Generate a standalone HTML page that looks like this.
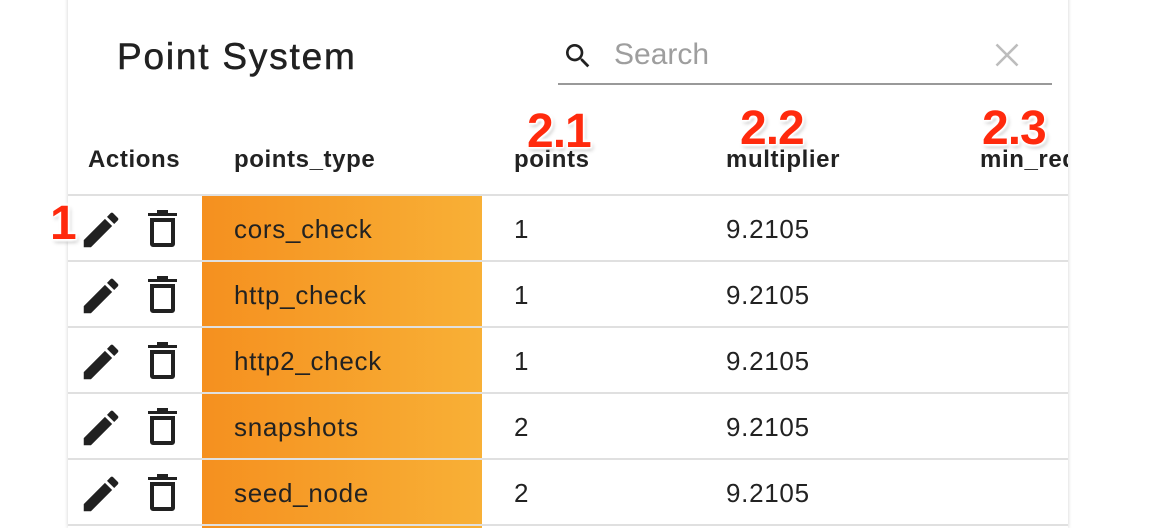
<!DOCTYPE html>
<html><head><meta charset="utf-8"><style>
*{margin:0;padding:0;box-sizing:border-box}
html,body{width:1160px;height:528px;overflow:hidden}
body{background:#fff;position:relative;font-family:"Liberation Sans",Arial,sans-serif;color:#212121}
.card{position:absolute;left:68px;top:-10px;width:1000px;height:538px;background:#fff;box-shadow:0 0 4px rgba(0,0,0,.18);overflow:hidden}
.abs{position:absolute}
.title{left:49px;top:46px;font-size:37px;letter-spacing:1.8px;color:#212121;-webkit-text-stroke:0.5px #212121}
.hd{font-size:24px;font-weight:bold;top:156px;color:#222;letter-spacing:0.6px}
.line{left:0;width:1000px;height:2px;background:#e0e0e0}
.cell{font-size:26px;color:#222;letter-spacing:0.7px}
.orange{left:134px;width:280px;background:linear-gradient(90deg,#f5901f,#f8b036)}
.lab{position:absolute;color:#ff2a0d;font-weight:bold;font-family:"Liberation Sans",Arial,sans-serif;font-size:48px;letter-spacing:-1px;text-shadow:0 0 2px #fff,1px 1px 0 #fff,-1px -1px 0 #fff,2px 2px 2px #fff,-2px 2px 2px #fff,2px -2px 2px #fff,-2px -2px 2px #fff,2px 3px 4px rgba(0,0,0,.3)}
</style></head><body>
<div class="card">
 <div class="abs title">Point System</div>
 <svg class="abs" style="left:494px;top:50px" width="32" height="32" viewBox="0 0 24 24"><path fill="#212121" d="M15.5 14h-.79l-.28-.27A6.47 6.47 0 0016 9.5 6.5 6.5 0 109.5 16c1.61 0 3.09-.59 4.23-1.57l.27.28v.79l5 4.99L20.49 19l-4.99-5zm-6 0C7.01 14 5 11.99 5 9.5S7.01 5 9.5 5 14 7.01 14 9.5 11.99 14 9.5 14z"/></svg>
 <div class="abs" style="left:546px;top:48px;font-size:30px;color:#9e9e9e">Search</div>
 <svg class="abs" style="left:925px;top:51px" width="28" height="28" viewBox="0 0 24 24"><path stroke="#bdbdbd" stroke-width="2.2" d="M3 3L21 21M21 3L3 21"/></svg>
 <div class="abs" style="left:490px;top:93px;width:494px;height:2px;background:#999"></div>
 <div class="abs hd" style="left:20px">Actions</div>
 <div class="abs hd" style="left:166px">points_type</div>
 <div class="abs hd" style="left:446px">points</div>
 <div class="abs hd" style="left:658px">multiplier</div>
 <div class="abs hd" style="left:912px">min_req</div>
 <div id="rows"></div>
</div>
<div class="lab" style="left:50px;top:196px">1</div>
<div class="lab" style="left:527px;top:104px">2.1</div>
<div class="lab" style="left:740px;top:101px">2.2</div>
<div class="lab" style="left:982px;top:101px">2.3</div>
<script>
var d=[["cors_check",1],["http_check",1],["http2_check",1],["snapshots",2],["seed_node",2],["",""]];
var h="";
for(var i=0;i<d.length;i++){var t=204+i*66;
h+='<div class="abs line" style="top:'+t+'px"></div>';
h+='<div class="abs orange" style="top:'+(t+2)+'px;height:64px"></div>';
if(d[i][0]){
h+='<div class="abs cell" style="left:166px;top:'+(t+20)+'px">'+d[i][0]+'</div>';
h+='<div class="abs cell" style="left:446px;top:'+(t+20)+'px">'+d[i][1]+'</div>';
h+='<div class="abs cell" style="left:658px;top:'+(t+20)+'px">9.2105</div>';
h+='<svg class="abs" style="left:10px;top:'+(t+13)+'px" width="46" height="46" viewBox="0 0 24 24"><path fill="#212121" d="M3 17.25V21h3.75L17.81 9.94l-3.75-3.75L3 17.25zM20.71 7.04a1 1 0 000-1.41l-2.34-2.34a1 1 0 00-1.41 0l-1.83 1.83 3.75 3.75 1.83-1.83z"/></svg>';
h+='<svg class="abs" style="left:80px;top:'+(t+16)+'px" width="29" height="37" viewBox="0 0 29 37"><path fill="#212121" fill-rule="evenodd" d="M0 3h29v3H0zM9 0h11v3H9zM2 8h25v26a3 3 0 01-3 3H5a3 3 0 01-3-3zM6 12v21h17V12z"/></svg>';}
}
document.getElementById("rows").innerHTML=h;
</script>
</body></html>
